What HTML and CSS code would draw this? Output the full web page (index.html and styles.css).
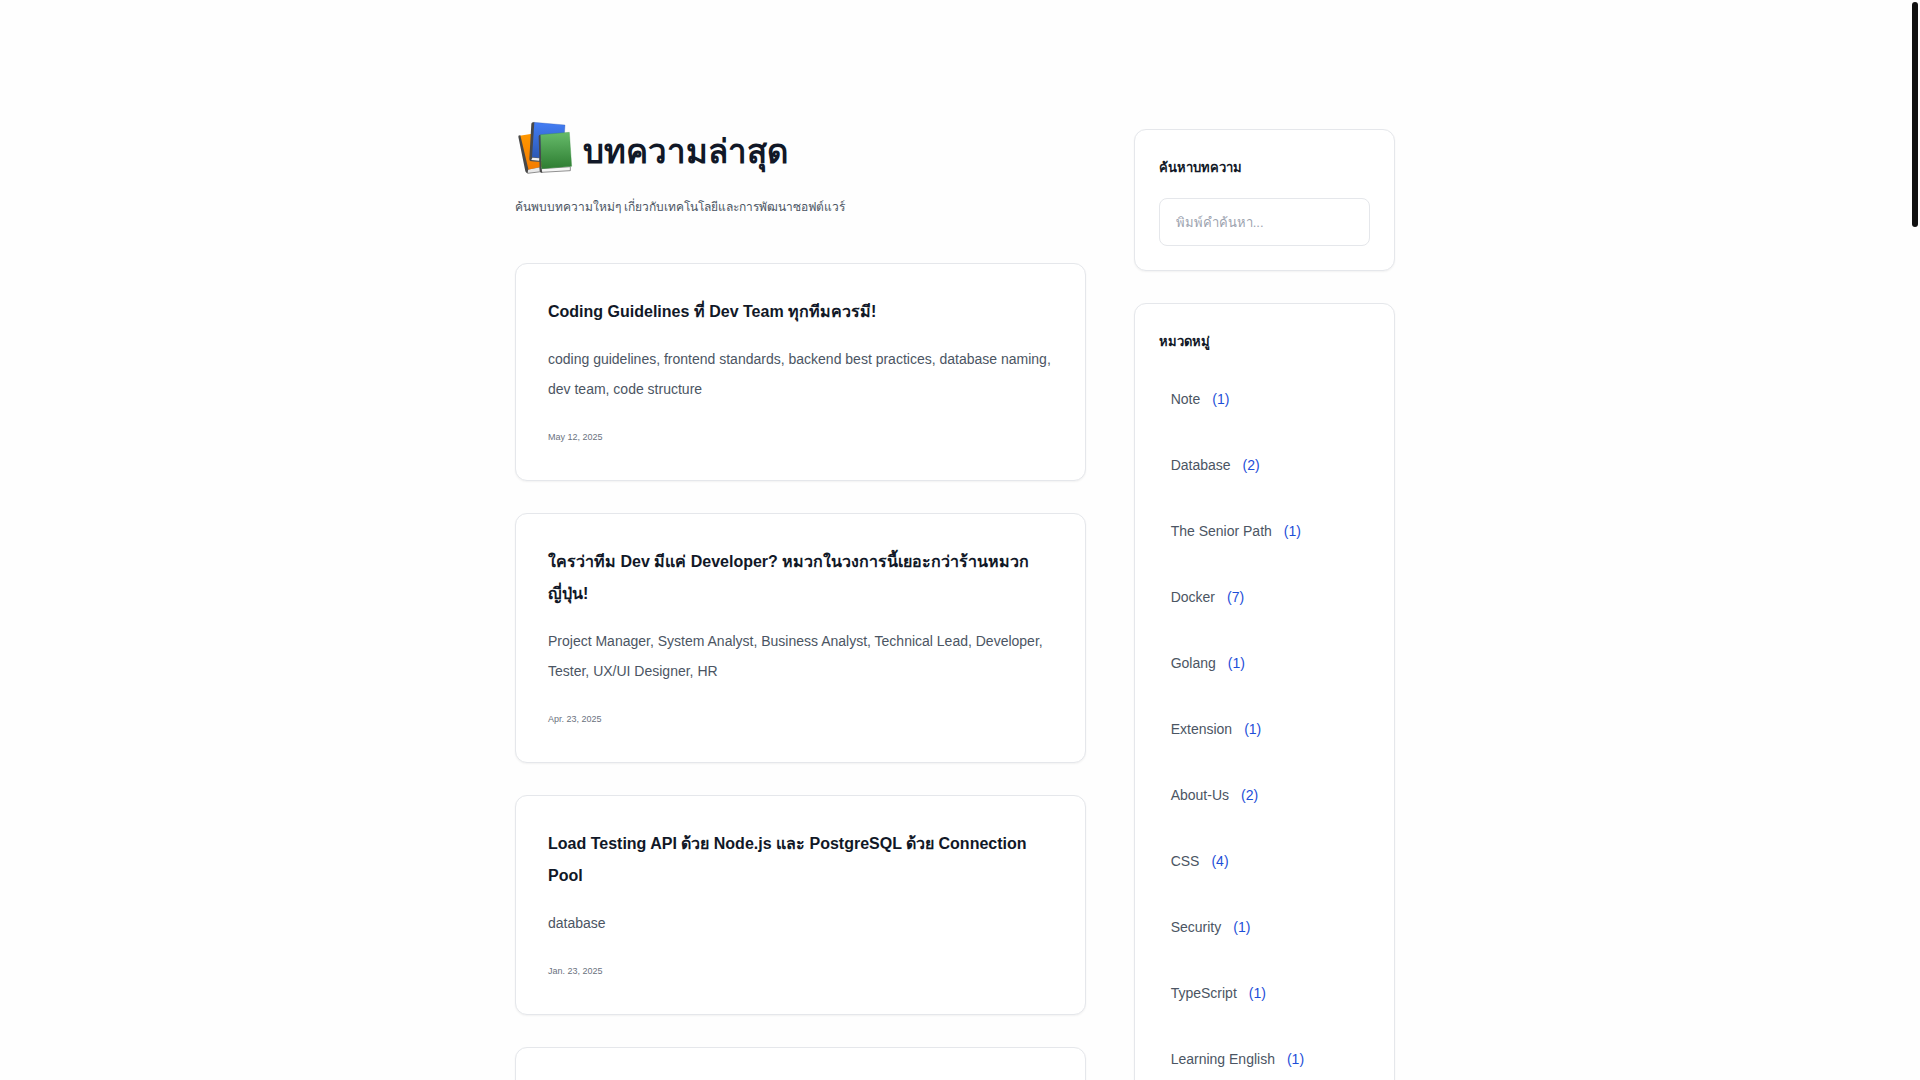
FILE: index.html
```html
<!DOCTYPE html>
<html lang="th">
<head>
    <meta charset="UTF-8">
    <meta name="viewport" content="width=device-width, initial-scale=1.0">
    <title>บทความล่าสุด</title>
    <link rel="stylesheet" href="styles.css">
</head>
<body>
    <div class="container">
        <!-- Articles -->
        <main class="content">
            <header class="page-header">
                <h1 class="page-title">
                    <svg class="books" viewBox="30 30 174 168" aria-hidden="true">
                        <defs>
                            <linearGradient id="orange" x1="0" y1="0" x2="0" y2="1">
                                <stop offset="0" stop-color="#ff9800"/>
                                <stop offset="1" stop-color="#f57c00"/>
                            </linearGradient>
                            <linearGradient id="blue" x1="0" y1="0" x2="0" y2="1">
                                <stop offset="0" stop-color="#437df5"/>
                                <stop offset="1" stop-color="#2a56b0"/>
                            </linearGradient>
                            <linearGradient id="green" x1="0" y1="0" x2="0" y2="1">
                                <stop offset="0" stop-color="#66bb6a"/>
                                <stop offset="1" stop-color="#2e7d32"/>
                            </linearGradient>
                        </defs>
                        <path fill="#e8e8e8" stroke="#5a5a5a" stroke-width="2" d="M66 178 104 171 108 185 68 190z"/>
                        <path fill="url(#orange)" d="M44 77 100 68 120 168 68 179z"/>
                        <path fill="#484848" d="M40 80Q39 76 46 76L70 177 67 190Q63 189 61 184z"/>
                        <path fill="#f0f0f0" stroke="#5a5a5a" stroke-width="2" d="M78 141 176 150 174 160 76 152z"/>
                        <path fill="url(#blue)" stroke="#3a5fae" stroke-width="1" d="M86 37 180 45 173 150 79 142z"/>
                        <path fill="#484848" d="M79 41Q80 36 88 37L81 142 105 145 105 155 76 153Q73 152 73 147z"/>
                        <path fill="#f0f0f0" d="M82 143 104 145 103 152 79 150z"/>
                        <path fill="#f5f5f5" stroke="#5a5a5a" stroke-width="2" d="M109 176 196 170 196 182 110 187z"/>
                        <path fill="url(#green)" stroke="#388e3c" stroke-width="1" d="M106 74 193 67 200 169 109 176z"/>
                        <path fill="#484848" d="M101 79Q101 74 106 74L109 176 112 188Q105 189 104 183z"/>
                    </svg>
                    บทความล่าสุด
                </h1>
                <p class="page-lead">ค้นพบบทความใหม่ๆ เกี่ยวกับเทคโนโลยีและการพัฒนาซอฟต์แวร์</p>
            </header>

            <div class="posts">
                <article class="card post">
                    <h2 class="post-title">Coding Guidelines ที่ Dev Team ทุกทีมควรมี!</h2>
                    <p class="post-text">coding guidelines, frontend standards, backend best practices, database naming,<br>dev team, code structure</p>
                    <time class="post-date" datetime="2025-05-12">May 12, 2025</time>
                </article>
                <article class="card post">
                    <h2 class="post-title">ใครว่าทีม Dev มีแค่ Developer? หมวกในวงการนี้เยอะกว่าร้านหมวกญี่ปุ่น!</h2>
                    <p class="post-text">Project Manager, System Analyst, Business Analyst, Technical Lead, Developer,<br>Tester, UX/UI Designer, HR</p>
                    <time class="post-date" datetime="2025-04-23">Apr. 23, 2025</time>
                </article>
                <article class="card post">
                    <h2 class="post-title">Load Testing API ด้วย Node.js และ PostgreSQL ด้วย Connection Pool</h2>
                    <p class="post-text">database</p>
                    <time class="post-date" datetime="2025-01-23">Jan. 23, 2025</time>
                </article>
                <article class="card post post-next"></article>
            </div>
        </main>

        <!-- Sidebar -->
        <aside class="sidebar">
            <form class="card widget">
                <label class="widget-title" for="search">ค้นหาบทความ</label>
                <input class="search" type="text" id="search" placeholder="พิมพ์คำค้นหา...">
            </form>
            <nav class="card widget">
                <h3 class="widget-title">หมวดหมู่</h3>
                <ul class="categories">
                    <li><a href="#">Note <span class="count">(1)</span></a></li>
                    <li><a href="#">Database <span class="count">(2)</span></a></li>
                    <li><a href="#">The Senior Path <span class="count">(1)</span></a></li>
                    <li><a href="#">Docker <span class="count">(7)</span></a></li>
                    <li><a href="#">Golang <span class="count">(1)</span></a></li>
                    <li><a href="#">Extension <span class="count">(1)</span></a></li>
                    <li><a href="#">About-Us <span class="count">(2)</span></a></li>
                    <li><a href="#">CSS <span class="count">(4)</span></a></li>
                    <li><a href="#">Security <span class="count">(1)</span></a></li>
                    <li><a href="#">TypeScript <span class="count">(1)</span></a></li>
                    <li><a href="#">Learning English <span class="count">(1)</span></a></li>
                </ul>
            </nav>
        </aside>
    </div>
    <div class="scroll-thumb"></div>
</body>
</html>
```
FILE: styles.css
```css
* {
    margin: 0;
    padding: 0;
    box-sizing: border-box;
}

body {
    height: 100vh;
    padding-right: 10px;
    overflow: hidden;
    background: #fefefe;
    color: #111827;
    font-family: "Liberation Sans", Arial, sans-serif;
    font-size: 14px;
    line-height: 30px;
}

.container {
    display: grid;
    grid-template-columns: repeat(3, 1fr);
    column-gap: 48px;
    max-width: 880px;
    margin: 0 auto;
    padding-top: 112px;
}

.content {
    grid-column: span 2;
}

/* Header */
.page-header {
    margin-bottom: 40px;
}

.page-title {
    display: flex;
    align-items: flex-start;
    gap: 10px;
    font-size: 33px;
    line-height: 80px;
}

.books {
    width: 58px;
    height: 56px;
    margin-top: 8px;
}

.page-lead {
    color: #4b5563;
    font-size: 12px;
    line-height: 31px;
}

/* Cards */
.card {
    background: #fff;
    border: 1px solid #e5e7eb;
    border-radius: 12px;
    box-shadow: 0 1px 2px rgba(0, 0, 0, 0.05);
}

.posts {
    display: flex;
    flex-direction: column;
    gap: 32px;
}

.post {
    padding: 32px;
}

.post-title {
    margin-bottom: 16px;
    font-size: 16px;
    line-height: 32px;
}

.post-text {
    margin-bottom: 22px;
    color: #4b5563;
    white-space: nowrap;
}

.post-date {
    display: block;
    color: #6b7280;
    font-size: 9px;
    line-height: 22px;
}

.post-next {
    min-height: 218px;
}

/* Sidebar */
.sidebar {
    display: flex;
    flex-direction: column;
    gap: 32px;
    padding-top: 17px;
}

.widget {
    padding: 24px;
}

.widget-title {
    display: block;
    margin-bottom: 16px;
    font-size: 13px;
    font-weight: bold;
    line-height: 28px;
}

.search {
    display: block;
    width: 100%;
    height: 48px;
    padding: 0 16px;
    border: 1px solid #e5e7eb;
    border-radius: 8px;
    background: #fff;
    color: #111827;
    font-family: inherit;
    font-size: 13px;
}

.search::placeholder {
    color: #9ca3af;
}

.categories {
    display: flex;
    flex-direction: column;
    gap: 12px;
    list-style: none;
}

.categories a {
    display: flex;
    gap: 12px;
    padding: 12px;
    color: #4b5563;
    text-decoration: none;
}

.count {
    color: #1d4ed8;
}

/* Scroll position */
.scroll-thumb {
    position: fixed;
    top: 2px;
    right: 2px;
    width: 6px;
    height: 225px;
    border-radius: 3px;
    background: #111;
}
```
